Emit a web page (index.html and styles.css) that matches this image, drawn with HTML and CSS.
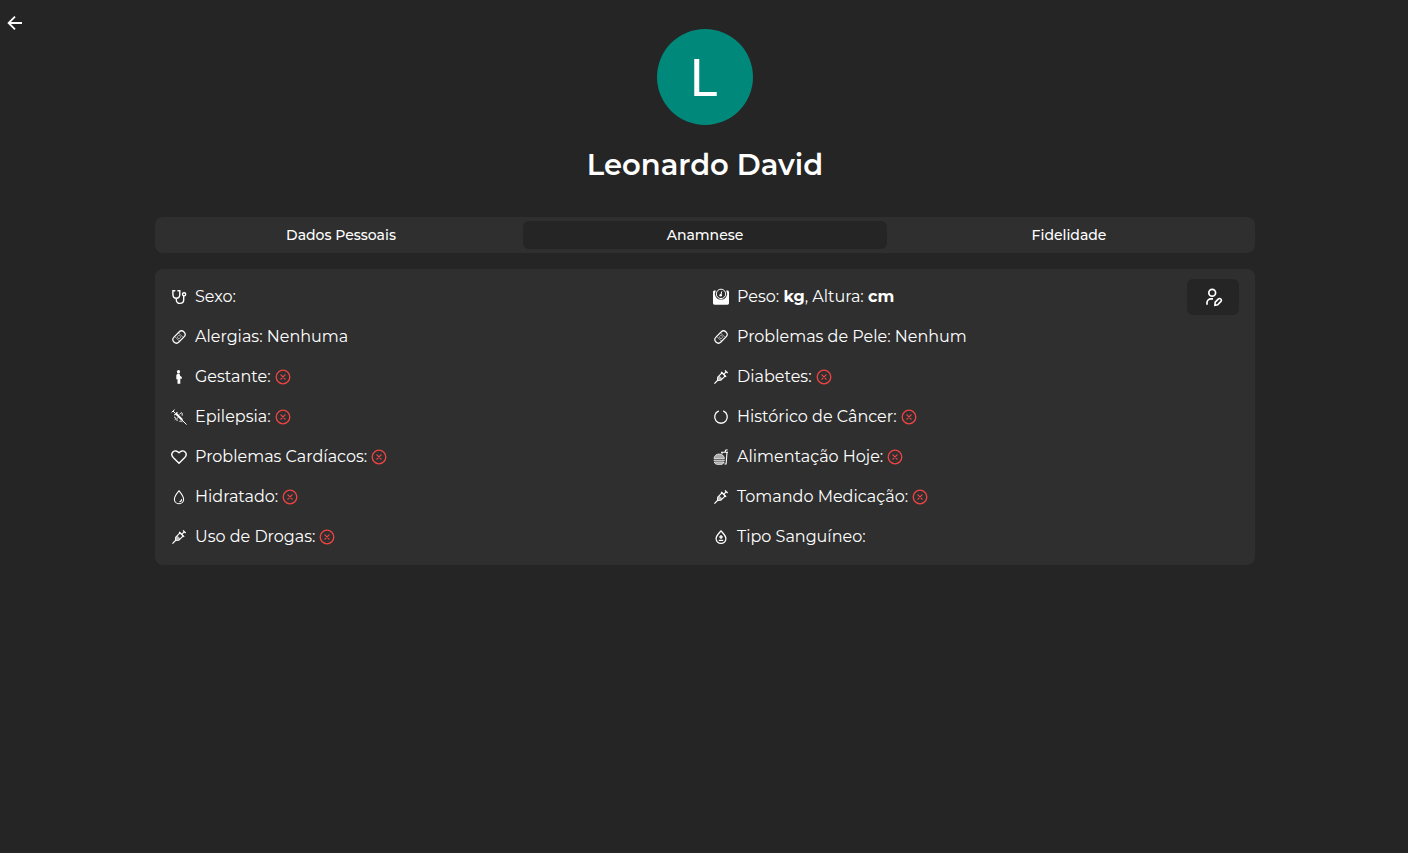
FILE: index.html
```html
<!DOCTYPE html>
<html lang="pt-BR">
<head>
    <meta charset="UTF-8">
    <meta name="viewport" content="width=device-width, initial-scale=1.0">
    <title>Leonardo David</title>
    <link rel="stylesheet" href="styles.css">
</head>
<body>
    <!-- Icons used more than once -->
    <svg class="sprite" aria-hidden="true">
        <symbol id="bandage" viewBox="0 0 16 16">
            <g transform="rotate(-45 8 8)" fill="none" stroke="currentColor" stroke-width="1.2">
                <rect x="0.9" y="4.5" width="14.2" height="7" rx="3.5"/>
                <path d="M5.4 5v6M10.6 5v6" stroke-width="0.6"/>
            </g>
            <g fill="currentColor">
                <circle cx="8" cy="6.6" r=".6"/><circle cx="9.4" cy="8" r=".6"/>
                <circle cx="8" cy="9.4" r=".6"/><circle cx="6.6" cy="8" r=".6"/>
            </g>
        </symbol>
        <symbol id="syringe" viewBox="0 0 16 16">
            <g transform="translate(7.8 8.2) rotate(45)" fill="none" stroke="currentColor">
                <path d="M0 4v5" stroke-width="1.2"/>
                <path d="M-2.2-4h4.4v6.200L0 4.600l-2.200-2.400z" stroke-width="1.1"/>
                <path d="M-2 0h4v1.800L0 4-2 1.800z" fill="currentColor" stroke="none" fill-opacity=".7"/>
                <path d="M-3.600-4h7.200M0-4v-3.600M-1.900-7.800h3.800" stroke-width="1.2"/>
            </g>
        </symbol>
        <symbol id="no" viewBox="0 0 16 16">
            <g fill="none" stroke="currentColor" stroke-width="1.3" stroke-linecap="round">
                <circle cx="8" cy="8" r="6.8"/>
                <path d="M5.9 5.9l4.200 4.200M10.100 5.900l-4.200 4.200"/>
            </g>
        </symbol>
    </svg>

    <a class="back" href="#" aria-label="Voltar">
        <svg viewBox="0 0 16 16" fill="none" stroke="currentColor" stroke-width="1.8">
            <path d="M15 8H2M8 1.6L1.6 8 8 14.4"/>
        </svg>
    </a>

    <main class="profile">
        <div class="avatar">L</div>
        <h1 class="name">Leonardo David</h1>

        <div class="tabs" role="tablist">
            <button class="tab" role="tab" aria-selected="false">Dados Pessoais</button>
            <button class="tab active" role="tab" aria-selected="true">Anamnese</button>
            <button class="tab" role="tab" aria-selected="false">Fidelidade</button>
        </div>

        <section class="card">
            <ul class="fields">
                <li class="field">
                    <svg class="icon" viewBox="0 0 16 16" fill="none" stroke="currentColor" stroke-width="1.4" stroke-linecap="round">
                        <path d="M3.8 1.8H1.9v3.4c0 2.4 1.4 4 3.4 4s3.5-1.6 3.5-4V1.8H6.900M5.300 9.200v1.600c0 2.200 1.500 3.600 3.600 3.600s3.800-1.400 3.800-3.600V7"/>
                        <circle cx="13.1" cy="5.3" r="1.6"/>
                    </svg>
                    <span>Sexo:</span>
                </li>
                <li class="field">
                    <svg class="icon" viewBox="0 0 16 16" fill="currentColor">
                        <path d="M1.6 1.6h1.2a5.900 5.900 0 0 0 5.200 9 5.900 5.900 0 0 0 5.200-9h1.200c.9 0 1.600.7 1.600 1.600v10.900c0 .9-.7 1.600-1.600 1.600H1.600c-.9 0-1.600-.7-1.600-1.600V3.200c0-.9.7-1.600 1.600-1.600z"/>
                        <circle cx="8" cy="4.9" r="4.7" fill="none" stroke="currentColor"/>
                        <circle cx="7.7" cy="6.3" r="1.3"/>
                        <path d="M7.8 6l1-3.600" stroke="currentColor"/>
                    </svg>
                    <span>Peso: <b>kg</b>, Altura: <b>cm</b></span>
                </li>
                <li class="field">
                    <svg class="icon"><use href="#bandage"/></svg>
                    <span>Alergias: Nenhuma</span>
                </li>
                <li class="field">
                    <svg class="icon"><use href="#bandage"/></svg>
                    <span>Problemas de Pele: Nenhum</span>
                </li>
                <li class="field">
                    <svg class="icon" viewBox="0 0 16 16" fill="currentColor">
                        <circle cx="7.5" cy="2.7" r="1.6"/>
                        <path d="M6.500 4.600h2l.6 2.200 1.700 1.300v1.700H9.300v5H6.500v-4.600H5.300V6.200z"/>
                    </svg>
                    <span>Gestante:</span>
                    <svg class="status" role="img" aria-label="Não"><use href="#no"/></svg>
                </li>
                <li class="field">
                    <svg class="icon"><use href="#syringe"/></svg>
                    <span>Diabetes:</span>
                    <svg class="status" role="img" aria-label="Não"><use href="#no"/></svg>
                </li>
                <li class="field">
                    <svg class="icon" viewBox="0 0 16 16" fill="none" stroke="currentColor">
                        <path d="M.6 3.400L3.600.6M2 2l2.300 2.300M11 11l4.600 4.600"/>
                        <path d="M3.400 6.200l3-3M4.800 5l5.400 5.600 1 .4-.2-1L5.600 4.400" stroke-width="1.1"/>
                        <path d="M3 8.300c1.800-.8 2.200 2 .8 2.500M6.800 8.500c-1.200 1-1 2.600-.5 3.600M8.600 5.400c1-.8 1.200-2.200 2.200-1.600 1.400 1-.6 2.300.6 2.900M8.400 12.300c1.200-.4 2-.2 3 .5"/>
                    </svg>
                    <span>Epilepsia:</span>
                    <svg class="status" role="img" aria-label="Não"><use href="#no"/></svg>
                </li>
                <li class="field">
                    <svg class="icon" viewBox="0 0 16 16" fill="none" stroke="currentColor" stroke-width="1.3" stroke-linecap="round">
                        <path d="M5.400 2.200A6.300 6.300 0 1 0 10.600 2.200"/>
                    </svg>
                    <span>Histórico de Câncer:</span>
                    <svg class="status" role="img" aria-label="Não"><use href="#no"/></svg>
                </li>
                <li class="field">
                    <svg class="icon" viewBox="0 0 16 16" fill="none" stroke="currentColor" stroke-width="1.4" stroke-linejoin="round">
                        <path d="M8 14.200L2.200 8.400C.6 6.700.5 4.400 1.900 3 3.500 1.400 6.300 1.500 8 3.800 9.700 1.500 12.500 1.400 14.100 3c1.400 1.400 1.300 3.700-.3 5.400z"/>
                    </svg>
                    <span>Problemas Cardíacos:</span>
                    <svg class="status" role="img" aria-label="Não"><use href="#no"/></svg>
                </li>
                <li class="field">
                    <svg class="icon" viewBox="0 0 16 16" fill="none" stroke="currentColor">
                        <path d="M1 9.700c.2-3 2.300-4.700 5.200-4.700s5 1.700 5.200 4.700z" fill="currentColor" fill-opacity=".6" stroke-width=".7"/>
                        <path d="M.6 11.300h11.200" stroke-width=".9"/>
                        <path d="M1.300 12.900h9.800c-.3 1.600-1.500 2.500-3.200 2.500H4.500c-1.700 0-2.900-.9-3.200-2.500z" fill="currentColor" fill-opacity=".6" stroke-width=".7"/>
                        <path d="M8 3.300h7M12 3.300l.6-2 2-.6M14 3.500l-.9 11.500h-1.600M9 3.500l.1 1.300" stroke-width="1.1"/>
                    </svg>
                    <span>Alimentação Hoje:</span>
                    <svg class="status" role="img" aria-label="Não"><use href="#no"/></svg>
                </li>
                <li class="field">
                    <svg class="icon" viewBox="0 0 16 16" fill="none" stroke="currentColor" stroke-width="1.1" stroke-linecap="round">
                        <path d="M8 1.800C5.800 4.400 3.400 7.200 3.400 10.200c0 2.600 2 4.500 4.600 4.500s4.600-1.900 4.600-4.500C12.600 7.200 10.200 4.400 8 1.800z"/>
                        <path d="M10.600 10.600c-.1 1.100-.8 1.900-1.800 2.200"/>
                    </svg>
                    <span>Hidratado:</span>
                    <svg class="status" role="img" aria-label="Não"><use href="#no"/></svg>
                </li>
                <li class="field">
                    <svg class="icon"><use href="#syringe"/></svg>
                    <span>Tomando Medicação:</span>
                    <svg class="status" role="img" aria-label="Não"><use href="#no"/></svg>
                </li>
                <li class="field">
                    <svg class="icon"><use href="#syringe"/></svg>
                    <span>Uso de Drogas:</span>
                    <svg class="status" role="img" aria-label="Não"><use href="#no"/></svg>
                </li>
                <li class="field">
                    <svg class="icon" viewBox="0 0 16 16" fill="none" stroke="currentColor" stroke-width="1.3">
                        <path d="M8 1.900C5.600 4.400 3.100 6.600 3.100 9.600c0 2.700 2.200 4.800 4.900 4.800s4.900-2.100 4.900-4.800C12.900 6.600 10.400 4.400 8 1.900z"/>
                        <path d="M8 6v4M6.200 8h3.600M5.800 11.300h4.400"/>
                    </svg>
                    <span>Tipo Sanguíneo:</span>
                </li>
            </ul>
            <button class="edit" aria-label="Editar anamnese">
                <svg viewBox="0 0 20 20" fill="none" stroke="currentColor" stroke-width="1.7">
                    <circle cx="9.200" cy="5.700" r="3.400"/>
                    <path d="M4 17.700v-1.900c0-2.300 1.700-3.900 4-3.900h2"/>
                    <path d="M11.900 18.200l.3-3 3-3.100c.8-.8 1.900-.8 2.600-.1s.7 1.800-.1 2.600l-3 3.200z" stroke-width="1.6"/>
                </svg>
            </button>
        </section>
    </main>
</body>
</html>
```

FILE: styles.css
```css
body {
    background-color: #252525;
    color: white;
    font-family: Montserrat, Inter, sans-serif;
    font-size: 16px;
    line-height: 24px;
    margin: 0;
    padding: 15px 5px 15px 7px;
}

.sprite {
    position: absolute;
    width: 0;
    height: 0;
}

.back {
    display: block;
    width: 16px;
    height: 16px;
    color: white;
}

.back svg {
    display: block;
}

.profile {
    display: flex;
    flex-direction: column;
    align-items: center;
    max-width: 1100px;
    margin: -2px auto 0;
}

.avatar {
    display: flex;
    align-items: center;
    justify-content: center;
    box-sizing: border-box;
    width: 96px;
    height: 96px;
    padding: 4px 2px 0 0;
    border-radius: 50%;
    background-color: #00897b;
    font-family: Roboto, sans-serif;
    font-size: 52px;
}

.name {
    margin: 20px 0 32px;
    font-size: 29px;
    line-height: 40px;
    font-weight: 600;
}

.tabs {
    display: grid;
    grid-template-columns: repeat(3, 1fr);
    width: 100%;
    box-sizing: border-box;
    padding: 4px;
    border-radius: 8px;
    background-color: #2f2f2f;
}

.tab {
    padding: 4px 12px;
    border: none;
    border-radius: 6px;
    background: none;
    color: white;
    font-family: inherit;
    font-size: 14px;
    line-height: 20px;
    font-weight: 500;
    cursor: pointer;
}

.tab.active {
    background-color: #252525;
}

.card {
    position: relative;
    width: 100%;
    box-sizing: border-box;
    margin-top: 16px;
    padding: 16px;
    border-radius: 8px;
    background-color: #2f2f2f;
}

.fields {
    display: grid;
    grid-template-columns: 1fr 1fr;
    gap: 16px;
    margin: 0;
    padding: 0;
    list-style: none;
}

.field {
    display: flex;
    align-items: center;
}

.icon {
    width: 16px;
    height: 16px;
    margin-right: 8px;
    overflow: visible;
}

.status {
    width: 16px;
    height: 16px;
    margin-left: 4px;
    color: #ef4444;
}

.edit {
    position: absolute;
    top: 10px;
    right: 16px;
    padding: 8px 16px;
    border: none;
    border-radius: 6px;
    background-color: #252525;
    color: white;
    cursor: pointer;
}

.edit svg {
    display: block;
    width: 20px;
    height: 20px;
}
```
